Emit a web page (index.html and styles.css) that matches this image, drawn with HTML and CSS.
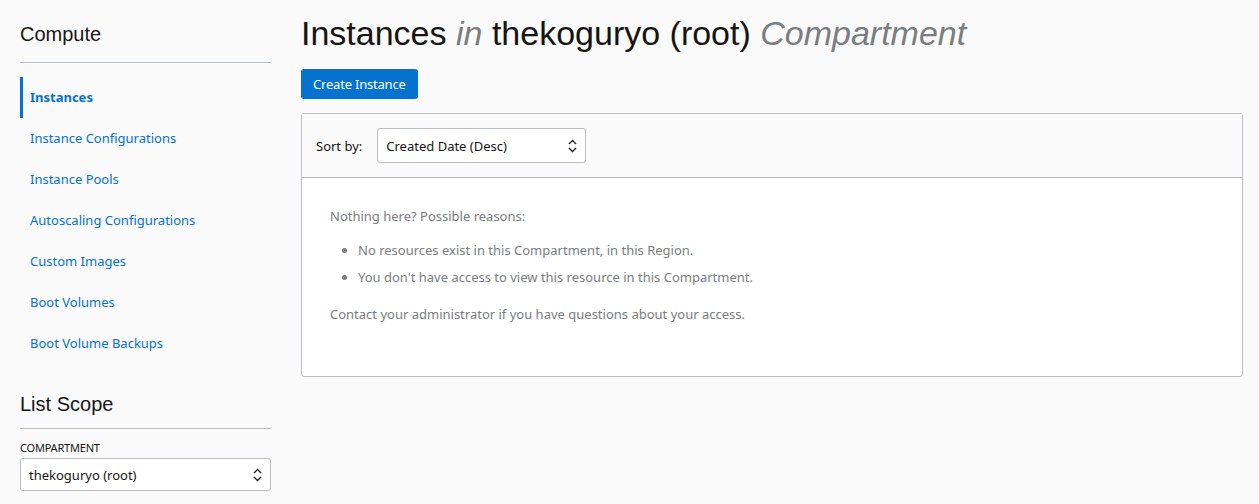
FILE: index.html
```html
<!DOCTYPE html>
<html>
<head>
<meta charset="utf-8">
<link rel="stylesheet" href="styles.css">
</head>
<body>
<div class="page">
  <aside class="sidebar">
    <h2 class="side-title">Compute</h2>
    <nav class="nav">
      <a class="nav-item active">Instances</a>
      <a class="nav-item">Instance Configurations</a>
      <a class="nav-item">Instance Pools</a>
      <a class="nav-item">Autoscaling Configurations</a>
      <a class="nav-item">Custom Images</a>
      <a class="nav-item">Boot Volumes</a>
      <a class="nav-item">Boot Volume Backups</a>
    </nav>
    <h2 class="side-title scope">List Scope</h2>
    <div class="field-label">COMPARTMENT</div>
    <div class="select side-select">
      <span>thekoguryo (root)</span>
      <svg class="chev" width="9" height="14" viewBox="0 0 9 14"><path d="M1 5 L4.5 1.5 L8 5 M1 9 L4.5 12.5 L8 9" fill="none" stroke="#222" stroke-width="1.4"/></svg>
    </div>
  </aside>
  <main class="main">
    <h1 class="title">Instances <em>in</em> thekoguryo (root) <em>Compartment</em></h1>
    <button class="btn">Create Instance</button>
    <section class="card">
      <div class="card-head">
        <span class="sort-label">Sort by:</span>
        <div class="select sort-select">
          <span>Created Date (Desc)</span>
          <svg class="chev" width="9" height="14" viewBox="0 0 9 14"><path d="M1 5 L4.5 1.5 L8 5 M1 9 L4.5 12.5 L8 9" fill="none" stroke="#222" stroke-width="1.4"/></svg>
        </div>
      </div>
      <div class="card-body">
        <p class="msg">Nothing here? Possible reasons:</p>
        <ul class="reasons">
          <li>No resources exist in this Compartment, in this Region.</li>
          <li>You don't have access to view this resource in this Compartment.</li>
        </ul>
        <p class="msg">Contact your administrator if you have questions about your access.</p>
      </div>
    </section>
  </main>
</div>
</body>
</html>
```

FILE: styles.css
```css
* { box-sizing: border-box; }
html, body { margin: 0; padding: 0; }
body {
  background: #fafafa;
  font-family: "Noto Sans", "Open Sans", sans-serif;
  font-size: 13px;
  color: #161513;
  height: 504px;
  overflow: hidden;
}
.page {
  display: flex;
  padding-left: 20px;
  gap: 30px;
}
.sidebar {
  width: 251px;
  flex: none;
  padding-top: 22px;
}
.side-title {
  font-family: "Liberation Sans", Arial, sans-serif;
  font-weight: normal;
  font-size: 20px;
  margin: 0;
  padding-bottom: 16px;
  border-bottom: 1px solid #b6bcc9;
  line-height: 24px;
  color: #161513;
}
.side-title.scope { padding-bottom: 12px; margin-top: 28px; }
.nav {
  display: flex;
  flex-direction: column;
  padding-top: 14px;
}
.nav-item {
  display: block;
  height: 41px;
  line-height: 41px;
  color: #0572ce;
  font-size: 13px;
  border-left: 3px solid transparent;
  padding-left: 7px;
  cursor: pointer;
}
.nav-item.active {
  font-weight: bold;
  border-left-color: #0572ce;
  color: #0572ce;
}
.field-label {
  font-size: 11px;
  margin-top: 12px;
  line-height: 14px;
  color: #161513;
  letter-spacing: -0.2px;
}
.select {
  display: flex;
  align-items: center;
  justify-content: space-between;
  background: #fff;
  border: 1px solid #b9bcc2;
  border-radius: 3px;
  padding: 0 8px 0 8px;
  font-size: 13px;
  color: #161513;
}
.side-select { height: 33px; margin-top: 3px; }
.main {
  flex: 1;
  padding-right: 16px;
}
.title {
  font-family: "Liberation Sans", Arial, sans-serif;
  font-weight: normal;
  font-size: 34px;
  line-height: 40px;
  margin: 13px 0 0 0;
  color: #161513;
}
.title em { color: #7b7d80; font-style: italic; }
.btn {
  margin-top: 16px;
  height: 30px;
  padding: 0 12px;
  background: #0572ce;
  color: #fff;
  border: none;
  border-radius: 3px;
  font-family: "Noto Sans", "Open Sans", sans-serif;
  font-size: 13px;
  letter-spacing: -0.2px;
}
.card {
  margin-top: 14px;
  border: 1px solid #b9bcc2;
  border-radius: 3px;
  background: #fff;
  height: 264px;
}
.card-head {
  display: flex;
  align-items: center;
  height: 64px;
  padding-left: 14px;
  background: #fafafa;
  border-bottom: 1px solid #b9bcc2;
  gap: 15px;
}
.sort-label { color: #161513; }
.sort-select { width: 209px; height: 35px; }
.card-body {
  padding: 29px 28px;
  color: #7b7d80;
}
.msg { margin: 0; line-height: 18px; }
.reasons {
  margin: 12px 0 14px 0;
  padding-left: 28px;
  line-height: 27px;
}
.reasons li::marker { color: #7b7d80; }
.chev { flex: none; }
```
